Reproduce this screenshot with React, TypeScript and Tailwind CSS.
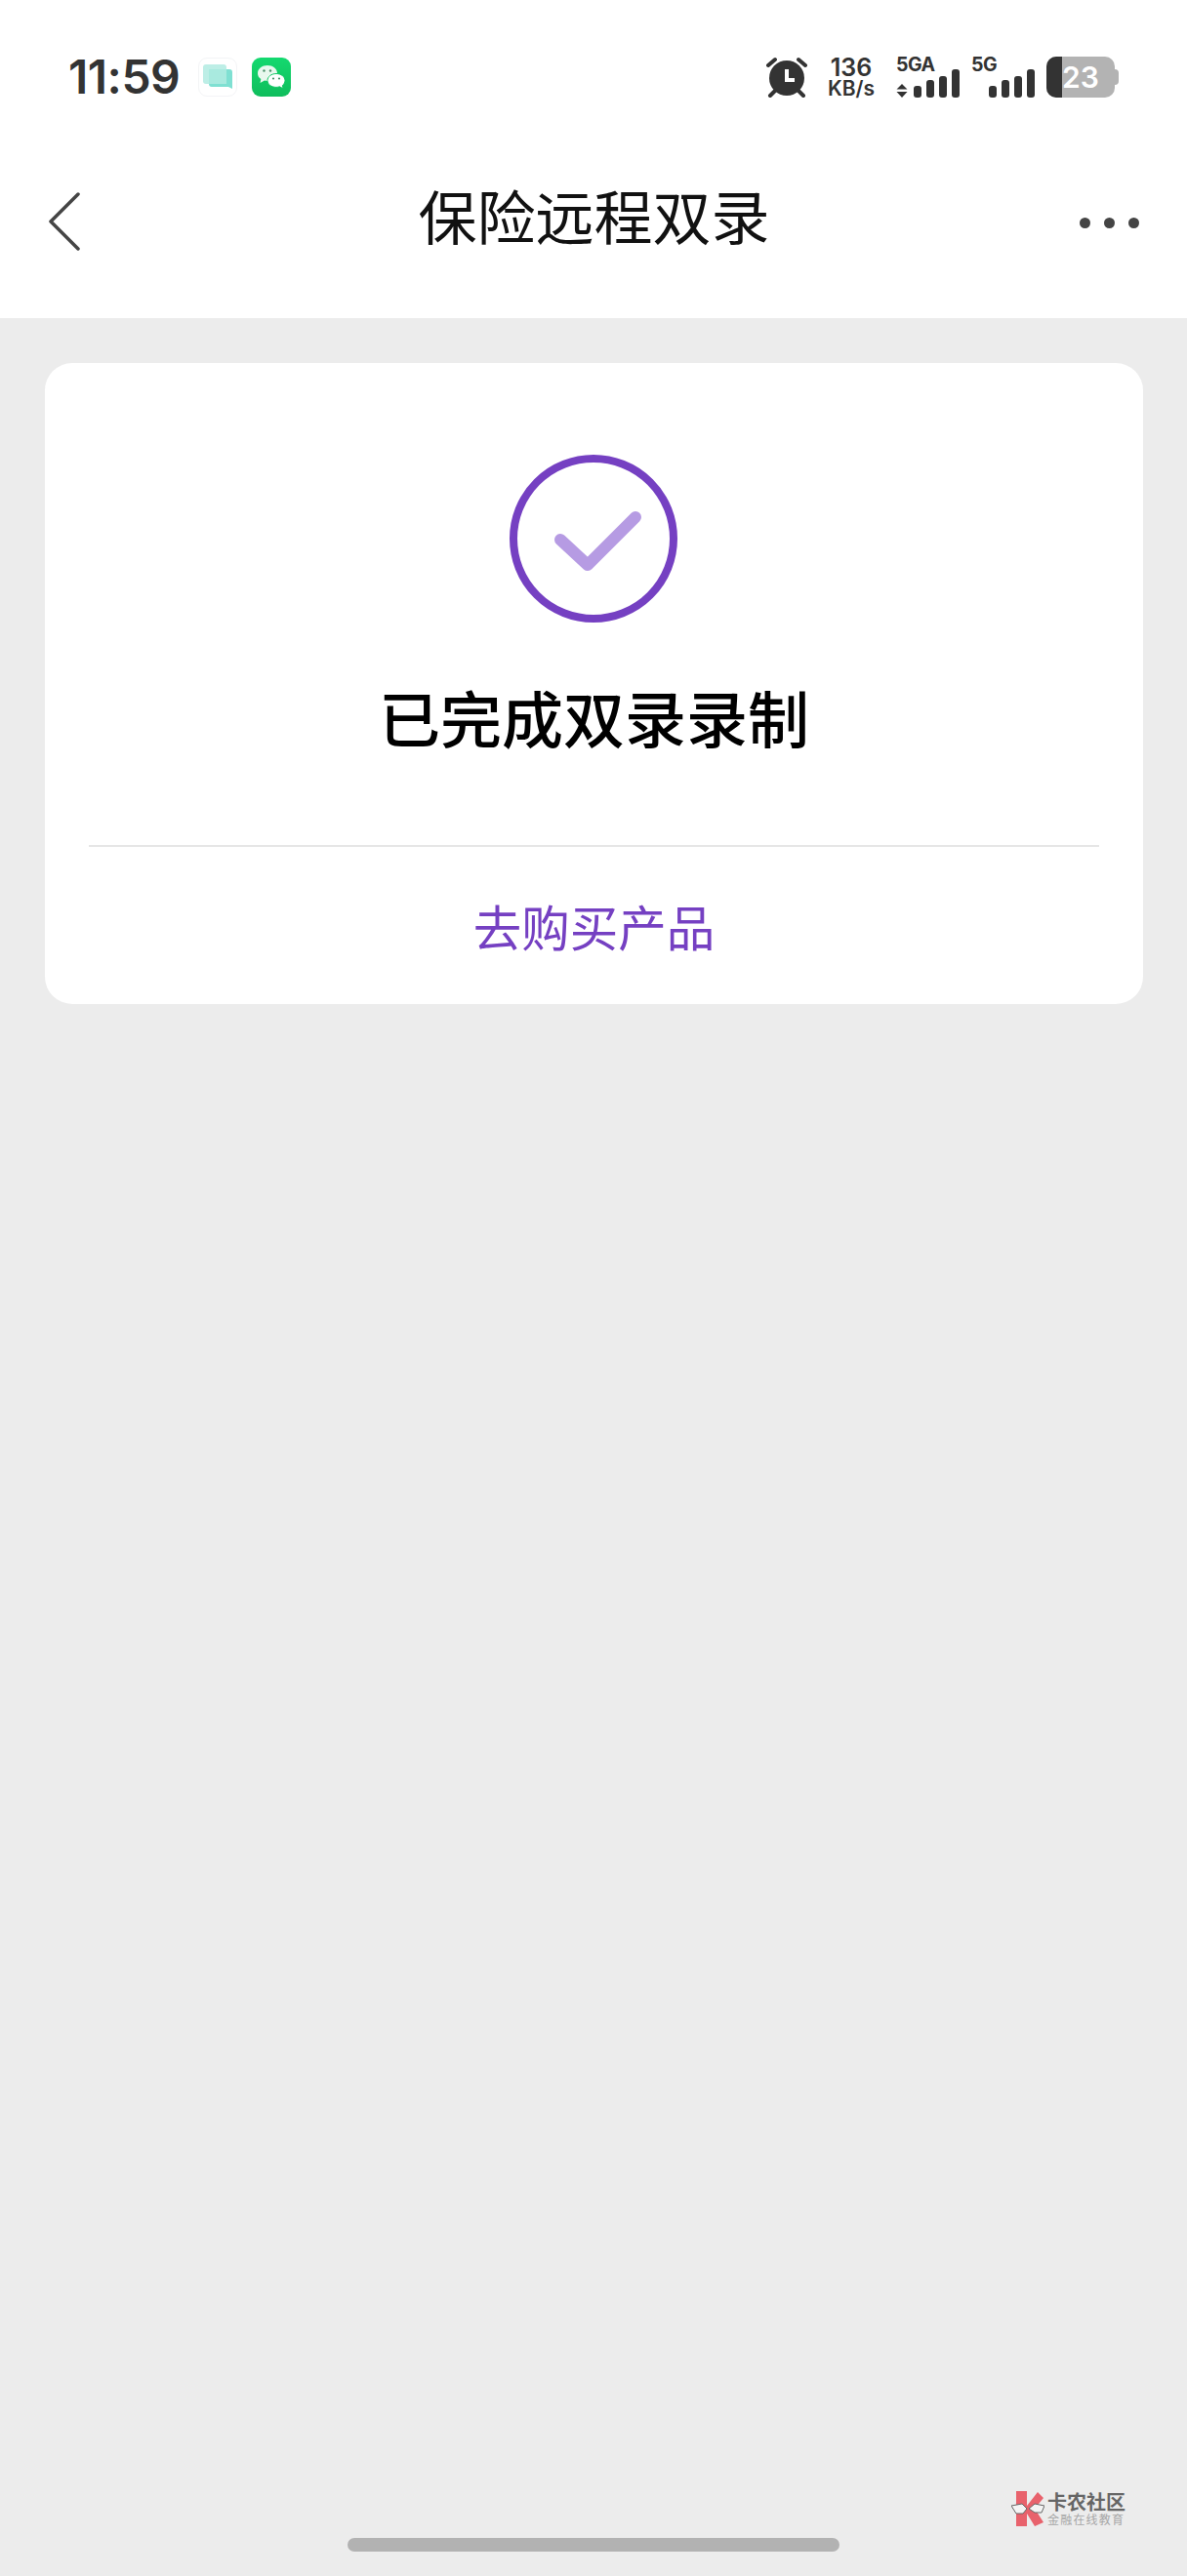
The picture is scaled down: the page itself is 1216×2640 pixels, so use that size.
const cjk = "font-['Noto_Sans_CJK_SC','Noto_Sans',sans-serif]";

function ChatIcon() {
  return (
    <div className="w-10 h-10 rounded-[9px] border border-gray-100 bg-white flex items-center justify-center">
      <svg width="32" height="28" viewBox="0 0 32 28">
        <rect x="1" y="1" width="24" height="20" rx="3" fill="#bdeee6" />
        <path d="M7 6h21a3 3 0 0 1 3 3v17l-4-2H10a3 3 0 0 1-3-3z" fill="#7fe0d2" />
        <rect x="7" y="6" width="18" height="15" fill="#a9eadf" />
      </svg>
    </div>
  );
}

function WechatIcon() {
  return (
    <div className="w-10 h-10 rounded-[9px] bg-gradient-to-b from-[#14d96f] to-[#0fbd5c] flex items-center justify-center">
      <svg width="30" height="26" viewBox="0 0 30 26">
        <path d="M11 1c5.500 0 10 3.500 10 8 0 4.500-4.500 8-10 8-1 0-2-.1-3-.4L3.500 19l.8-4C2 13.500 1 11.500 1 9c0-4.500 4.500-8 10-8z" fill="#e8f8ee" />
        <path d="M20 9.500c4.800 0 9 3 9 7 0 2-1 3.700-2.600 5l.6 3.300-3.500-2c-1.100.3-2.300.6-3.500.6-5 0-9-3-9-6.900s4-7 9-7z" fill="#fff" stroke="#12c765" strokeWidth="1" />
        <circle cx="7.500" cy="6.500" r="1.200" fill="#4a8f6a" />
        <circle cx="14" cy="6.500" r="1.200" fill="#4a8f6a" />
        <circle cx="17" cy="14.500" r="1.100" fill="#4a8f6a" />
        <circle cx="23" cy="14.500" r="1.100" fill="#4a8f6a" />
      </svg>
    </div>
  );
}

function AlarmIcon() {
  return (
    <svg width="42" height="42" viewBox="0 0 42 42">
      <circle cx="21" cy="22" r="18" fill="#333" />
      <path d="M2 9 9 3M40 9 33 3M9 35l-5 5M33 35l5 5" stroke="#333" strokeWidth="4" strokeLinecap="round" />
      <path d="M21 13v11h8" fill="none" stroke="#fff" strokeWidth="4" />
    </svg>
  );
}

function Bars({ arrows }: { arrows?: boolean }) {
  const heights = [12, 18, 22, 29];
  return (
    <div className="flex items-end gap-[5px]">
      {arrows && (
        <svg width="12" height="14" viewBox="0 0 12 14" className="mr-[1px]">
          <path d="M6 0l5.500 5.500H.5zM6 14l5.500-6H.5z" fill="#333" />
        </svg>
      )}
      {heights.map((h, i) => (
        <div key={i} className="w-[8px] rounded-[3px] bg-[#333]" style={{ height: h }} />
      ))}
    </div>
  );
}

function Signal({ label, arrows, w }: { label: string; arrows?: boolean; w: string }) {
  return (
    <div className={`relative h-[42px] flex items-end justify-end ${w}`}>
      <span className="absolute left-0 top-[-3px] text-[19.500px] leading-[22px] font-bold text-[#333] font-['Inter',sans-serif] tracking-[-0.5px]">
        {label}
      </span>
      <Bars arrows={arrows} />
    </div>
  );
}

function Battery() {
  return (
    <div className="relative w-[74px] h-[42px] flex items-center">
      <div className="w-[70px] h-[42px] rounded-[10px] bg-[#b3b3b3] overflow-hidden flex">
        <div className="w-4 bg-[#333]" />
        <span className="flex-1 text-center pr-[16px] text-[30px] leading-[42px] font-semibold text-white font-['Inter',sans-serif]">
          23
        </span>
      </div>
      <div className="w-1 h-4 rounded-r-full bg-[#b3b3b3]" />
    </div>
  );
}

function StatusBar() {
  return (
    <div className="h-[158px] pl-[70px] pr-[70px] flex items-center justify-between">
      <div className="flex items-center">
        <span className="w-[133px] text-[48px] leading-none font-semibold text-[#333] tracking-[-0.5px] font-['Inter',sans-serif]">
          11:59
        </span>
        <ChatIcon />
        <div className="w-[15px]" />
        <WechatIcon />
      </div>
      <div className="flex items-center">
        <AlarmIcon />
        <div className="w-[19px] flex-none" />
        <div className="w-[52px] flex flex-col items-center font-['Inter',sans-serif] text-[#333] font-semibold">
          <span className="text-[25px] leading-[24px]">136</span>
          <span className="text-[21px] leading-[20px]">KB/s</span>
        </div>
        <div className="w-5 flex-none" />
        <Signal label="5GA" arrows w="w-[65px]" />
        <div className="w-[12px] flex-none" />
        <Signal label="5G" w="w-[65px]" />
        <div className="w-3 flex-none" />
        <Battery />
      </div>
    </div>
  );
}

function NavBar() {
  return (
    <div className="h-[128px] pl-[50px] pr-[49px] grid grid-cols-[1fr_auto_1fr] items-center">
      <svg width="32" height="60" viewBox="0 0 32 60" className="mt-[10px]">
        <path d="M30 2 2 30l28 28" fill="none" stroke="#444" strokeWidth="3.500" strokeLinecap="round" strokeLinejoin="round" />
      </svg>
      <h1 className={`text-[60px] leading-none font-normal text-[#111] mt-[-5px] ${cjk}`}>保险远程双录</h1>
      <div className="flex justify-end gap-[14px] mt-[12px]">
        <div className="w-[11px] h-[11px] rounded-full bg-[#444]" />
        <div className="w-[11px] h-[11px] rounded-full bg-[#444]" />
        <div className="w-[11px] h-[11px] rounded-full bg-[#444]" />
      </div>
    </div>
  );
}

function SuccessCard() {
  return (
    <div className="ml-[46px] mr-[45px] mt-[46px] h-[657px] rounded-[28px] bg-white px-[45px] flex flex-col items-center">
      <svg width="172" height="172" viewBox="0 0 172 172" className="mt-[94px] mr-[2px]">
        <circle cx="86" cy="86" r="82" fill="none" stroke="#7540c2" strokeWidth="8" />
        <path d="M52 87l28 26 49-49" fill="none" stroke="#b69be3" strokeWidth="12" strokeLinecap="round" strokeLinejoin="round" />
      </svg>
      <h2 className={`mt-[51px] text-[63px] leading-[90px] font-medium text-black ${cjk}`}>已完成双录录制</h2>
      <div className="w-full h-[2px] bg-[#e6e6e6] mt-[87px]" />
      <div className={`flex-1 flex items-center pt-[1px] text-[49.500px] text-[#7540c2] ${cjk}`}>去购买产品</div>
    </div>
  );
}

function Watermark() {
  return (
    <div className="absolute left-[1036px] top-[2553px] flex items-center gap-[3px]">
      <svg width="34" height="36" viewBox="0 0 34 36">
        <path d="M5 0h11v15l11-14 6 6-9 11 9 14-9 4-8-13v13H5z" fill="#e8626c" />
        <path d="M0 15l11-2 5 5-4 5H5zM18 18l6-5 10 2-3 7h-7z" fill="#f4f4f4" stroke="#666" strokeWidth="1" />
      </svg>
      <div className={`flex flex-col ${cjk}`}>
        <span className="text-[20px] leading-[22px] font-bold text-[#666]">卡农社区</span>
        <span className="text-[12px] leading-[14px] tracking-[1.200px] text-[#a6a6a6]">金融在线教育</span>
      </div>
    </div>
  );
}

export default function App() {
  return (
    <div className="relative w-[1216px] h-[2640px] bg-[#ececec] flex flex-col overflow-hidden">
      <header className="bg-white pb-10">
        <StatusBar />
        <NavBar />
      </header>
      <SuccessCard />
      <div className="mt-auto mb-[25px] mx-auto w-[504px] h-[14px] rounded-full bg-[#b2b2b2]" />
      <Watermark />
    </div>
  );
}
